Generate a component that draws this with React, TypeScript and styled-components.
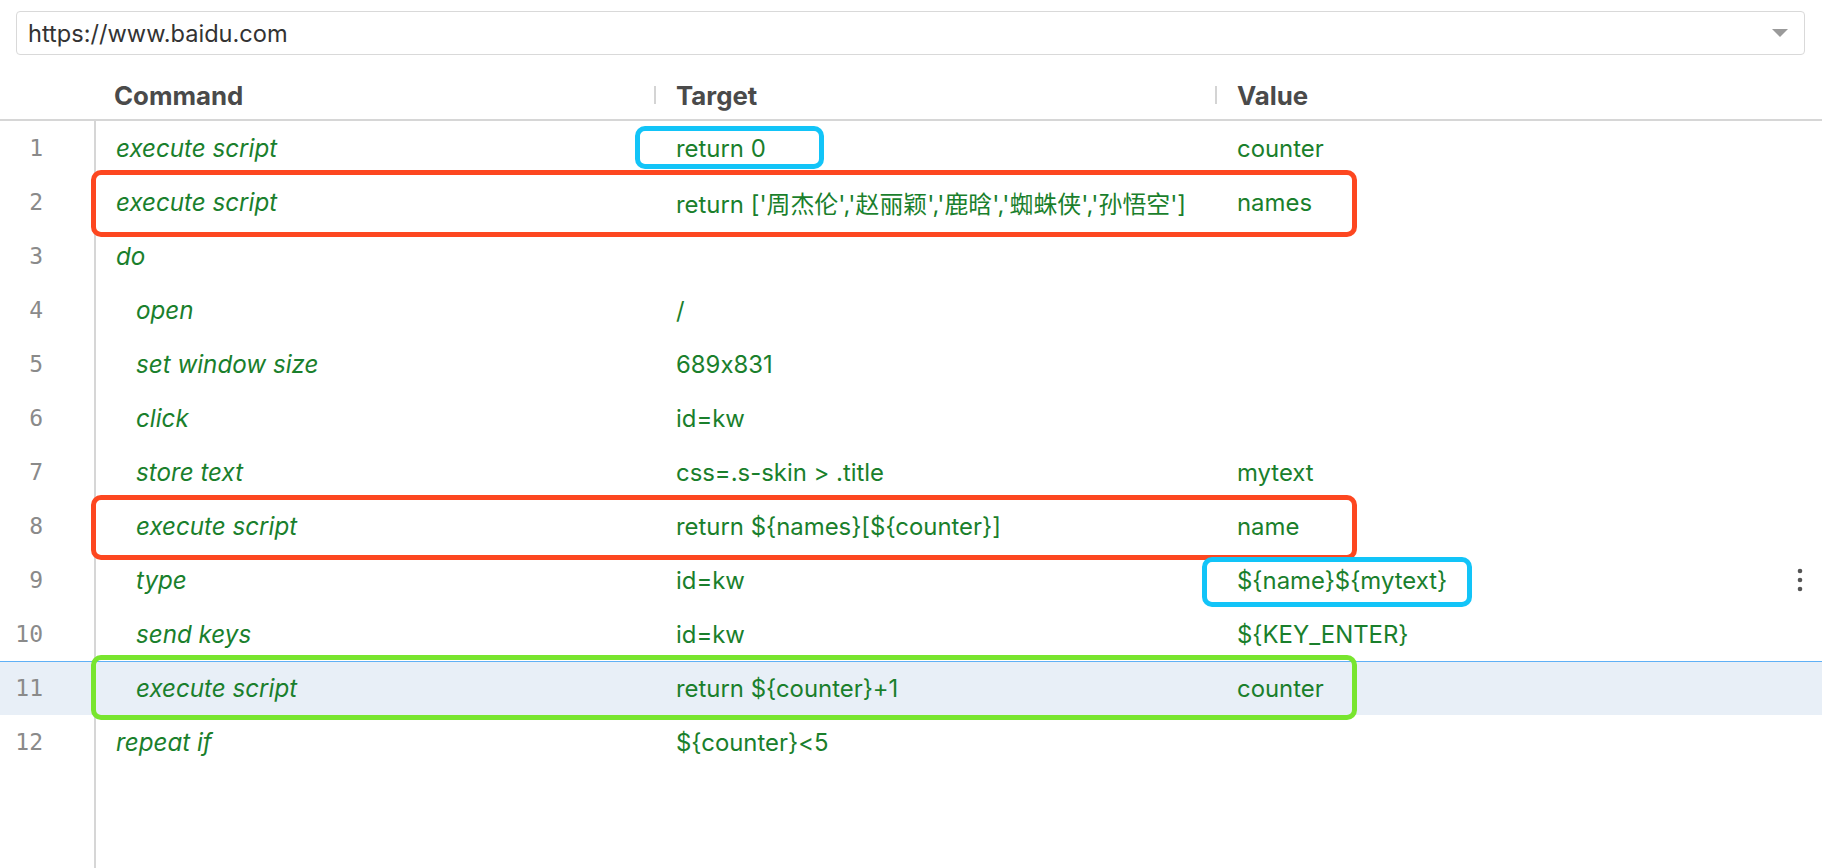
import React from "react";
import styled, { createGlobalStyle } from "styled-components";

const GlobalStyle = createGlobalStyle`
  html, body { margin: 0; padding: 0; background: #ffffff; }
  body {
    font-family: Inter, "Noto Sans CJK SC", sans-serif;
    font-feature-settings: "calt" 0;
  }
  * { box-sizing: border-box; }
`;

const Page = styled.div`
  display: flex;
  flex-direction: column;
  width: 1822px;
  height: 868px;
  overflow: hidden;
  background: #ffffff;
`;

const UrlBar = styled.div`
  margin: 11px 17px 0 16px;
  height: 44px;
  border: 1px solid #d9d9d9;
  border-radius: 4px;
  display: flex;
  align-items: center;
  justify-content: space-between;
  padding: 0 16px 0 11px;
  font-size: 23.6px;
  color: #333333;
`;

const Caret = styled.svg`
  width: 16px;
  height: 8px;
  display: block;
`;

const HeaderRow = styled.div`
  display: grid;
  grid-template-columns: 96px 558px 561px 1fr;
  height: 66px;
  padding-top: 16px;
  border-bottom: 2px solid #d6d6d6;
  align-items: center;
`;

const HeaderCell = styled.div<{ $first?: boolean }>`
  display: flex;
  align-items: center;
  gap: 20px;
  padding-left: ${(p) => (p.$first ? "18px" : "0")};
  font-size: 25.8px;
  font-weight: 700;
  color: #4a4a4a;
`;

const HeaderSep = styled.span`
  width: 2px;
  height: 18px;
  background: #d4d4d4;
`;

const Body = styled.div`
  position: relative;
  flex: 1;
  display: flex;
  flex-direction: column;
`;

const Row = styled.div<{ $selected?: boolean }>`
  display: grid;
  grid-template-columns: 96px 560px 561px 1fr 44px;
  height: 54px;
  background: ${(p) => (p.$selected ? "#e8eff7" : "transparent")};
  box-shadow: ${(p) => (p.$selected ? "inset 0 1px 0 #5fb0f6" : "none")};
  font-size: 23.9px;
  color: #1a7f2c;
`;

const LineNo = styled.div`
  display: flex;
  align-items: center;
  justify-content: flex-end;
  padding-right: 51px;
  border-right: 2px solid #d6d6d6;
  font-family: "DejaVu Sans Mono", monospace;
  font-size: 23px;
  color: #8a8a8a;
`;

const CommandCell = styled.div<{ $indent?: boolean }>`
  display: flex;
  align-items: center;
  padding-left: ${(p) => (p.$indent ? "40px" : "20px")};
  font-style: italic;
  font-size: 24.2px;
  white-space: nowrap;
`;

const TextCell = styled.div`
  display: flex;
  align-items: center;
  padding-left: 20px;
  white-space: nowrap;
`;

const ActionCell = styled.div`
  display: flex;
  align-items: center;
  justify-content: center;
`;

const Kebab = styled.svg`
  width: 6px;
  height: 24px;
  display: block;
`;

const Filler = styled.div`
  flex: 1;
  display: flex;
`;

const FillerGutter = styled.div`
  width: 96px;
  border-right: 2px solid #d6d6d6;
`;

const Annotation = styled.div<{
  $color: string;
  $left: number;
  $top: number;
  $width: number;
  $height: number;
}>`
  position: absolute;
  left: ${(p) => p.$left}px;
  top: ${(p) => p.$top}px;
  width: ${(p) => p.$width}px;
  height: ${(p) => p.$height}px;
  border: 5px solid ${(p) => p.$color};
  border-radius: 10px;
  pointer-events: none;
`;

type Cmd = {
  command: string;
  target?: string;
  value?: string;
  indent?: boolean;
  selected?: boolean;
  menu?: boolean;
};

const commands: Cmd[] = [
  { command: "execute script", target: "return 0", value: "counter" },
  {
    command: "execute script",
    target: "return ['周杰伦','赵丽颖','鹿晗','蜘蛛侠','孙悟空']",
    value: "names",
  },
  { command: "do" },
  { command: "open", target: "/", indent: true },
  { command: "set window size", target: "689x831", indent: true },
  { command: "click", target: "id=kw", indent: true },
  { command: "store text", target: "css=.s-skin > .title", value: "mytext", indent: true },
  { command: "execute script", target: "return ${names}[${counter}]", value: "name", indent: true },
  { command: "type", target: "id=kw", value: "${name}${mytext}", indent: true, menu: true },
  { command: "send keys", target: "id=kw", value: "${KEY_ENTER}", indent: true },
  { command: "execute script", target: "return ${counter}+1", value: "counter", indent: true, selected: true },
  { command: "repeat if", target: "${counter}<5" },
];

const RED = "#fd4720";
const BLUE = "#12c4f8";
const GREEN = "#78e52e";

const annotations = [
  { color: BLUE, left: 635, top: 5, width: 189, height: 43 },
  { color: RED, left: 91, top: 49, width: 1266, height: 67 },
  { color: RED, left: 91, top: 374, width: 1266, height: 65 },
  { color: BLUE, left: 1202, top: 436, width: 270, height: 50 },
  { color: GREEN, left: 91, top: 534, width: 1266, height: 65 },
];

export default function App() {
  return (
    <>
      <GlobalStyle />
      <Page>
        <UrlBar>
          <span>https://www.baidu.com</span>
          <Caret viewBox="0 0 16 8">
            <polygon points="0,0 16,0 8,8" fill="#9a9a9a" />
          </Caret>
        </UrlBar>
        <HeaderRow>
          <div />
          <HeaderCell $first>Command</HeaderCell>
          <HeaderCell>
            <HeaderSep />
            Target
          </HeaderCell>
          <HeaderCell>
            <HeaderSep />
            Value
          </HeaderCell>
        </HeaderRow>
        <Body>
          {commands.map((c, i) => (
            <Row key={i} $selected={c.selected}>
              <LineNo>{i + 1}</LineNo>
              <CommandCell $indent={c.indent}>{c.command}</CommandCell>
              <TextCell>{c.target ?? ""}</TextCell>
              <TextCell>{c.value ?? ""}</TextCell>
              <ActionCell>
                {c.menu && (
                  <Kebab viewBox="0 0 6 24">
                    <circle cx="3" cy="3" r="2.3" fill="#555" />
                    <circle cx="3" cy="12" r="2.3" fill="#555" />
                    <circle cx="3" cy="21" r="2.3" fill="#555" />
                  </Kebab>
                )}
              </ActionCell>
            </Row>
          ))}
          <Filler>
            <FillerGutter />
          </Filler>
          {annotations.map((a, i) => (
            <Annotation
              key={i}
              $color={a.color}
              $left={a.left}
              $top={a.top}
              $width={a.width}
              $height={a.height}
            />
          ))}
        </Body>
      </Page>
    </>
  );
}
